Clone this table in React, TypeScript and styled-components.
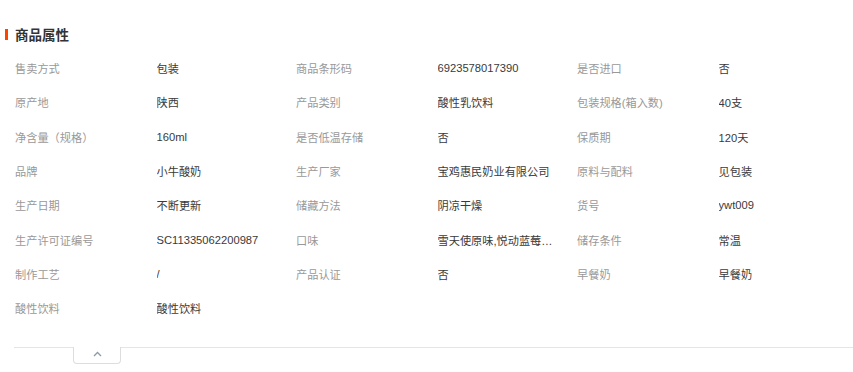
import styled, { createGlobalStyle } from "styled-components";

const GlobalStyle = createGlobalStyle`
  body {
    margin: 0;
    background: #fff;
    font-family: "Liberation Sans", "Noto Sans CJK SC", sans-serif;
  }
`;

const attrs: [string, string][] = [
  ["售卖方式", "包装"],
  ["商品条形码", "6923578017390"],
  ["是否进口", "否"],
  ["原产地", "陕西"],
  ["产品类别", "酸性乳饮料"],
  ["包装规格(箱入数)", "40支"],
  ["净含量（规格）", "160ml"],
  ["是否低温存储", "否"],
  ["保质期", "120天"],
  ["品牌", "小牛酸奶"],
  ["生产厂家", "宝鸡惠民奶业有限公司"],
  ["原料与配料", "见包装"],
  ["生产日期", "不断更新"],
  ["储藏方法", "阴凉干燥"],
  ["货号", "ywt009"],
  ["生产许可证编号", "SC11335062200987"],
  ["口味", "雪天使原味,悦动蓝莓味,草莓味"],
  ["储存条件", "常温"],
  ["制作工艺", "/"],
  ["产品认证", "否"],
  ["早餐奶", "早餐奶"],
  ["酸性饮料", "酸性饮料"],
];

const App = () => {
  return (
    <Wrapper>
      <GlobalStyle />
      <Header>
        <Bar />
        <Title>商品属性</Title>
      </Header>
      <Grid>
        {attrs.map(([label, value]) => (
          <Pair key={label}>
            <Label>{label}</Label>
            <Value title={value}>{value}</Value>
          </Pair>
        ))}
      </Grid>
      <Footer>
        <Toggle>
          <svg width="9" height="6" viewBox="0 0 9 6">
            <polyline
              points="1,5 4.5,1.5 8,5"
              fill="none"
              stroke="#8c9aa8"
              strokeWidth="1.3"
            />
          </svg>
        </Toggle>
      </Footer>
    </Wrapper>
  );
};

export default App;

const Wrapper = styled.div`
  width: 853px;
  height: 372px;
  overflow: hidden;
  box-sizing: border-box;
  padding-top: 27px;
`;

const Header = styled.div`
  display: flex;
  align-items: center;
  height: 14px;
  padding-left: 5px;
`;

const Bar = styled.div`
  width: 3px;
  height: 11px;
  background-color: #f40;
  margin-right: 7px;
`;

const Title = styled.div`
  font-family: "Noto Sans CJK SC", sans-serif;
  font-size: 13.5px;
  font-weight: bold;
  color: #333;
  line-height: 14px;
`;

const Grid = styled.div`
  display: grid;
  grid-template-columns: repeat(3, 281px);
  grid-auto-rows: 34.3px;
  padding-left: 15px;
  margin-top: 10px;
  font-size: 11.2px;
`;

const Pair = styled.div`
  display: grid;
  grid-template-columns: 141.5px 139.5px;
  align-items: center;
`;

const Label = styled.div`
  color: #999;
  white-space: nowrap;
`;

const Value = styled.div`
  color: #3a3a3a;
  white-space: nowrap;
  overflow: hidden;
  text-overflow: ellipsis;
  margin-right: 20px;
`;

const Footer = styled.div`
  margin: 22px 0 0 14px;
  border-top: 1px solid #e5e5e5;
  padding-left: 59px;
`;

const Toggle = styled.div`
  width: 48px;
  height: 17px;
  margin-top: -1px;
  box-sizing: border-box;
  background: #fff;
  border: 1px solid #ddd;
  border-top: none;
  border-radius: 0 0 4px 4px;
  display: flex;
  justify-content: center;
  padding-top: 4px;
`;
